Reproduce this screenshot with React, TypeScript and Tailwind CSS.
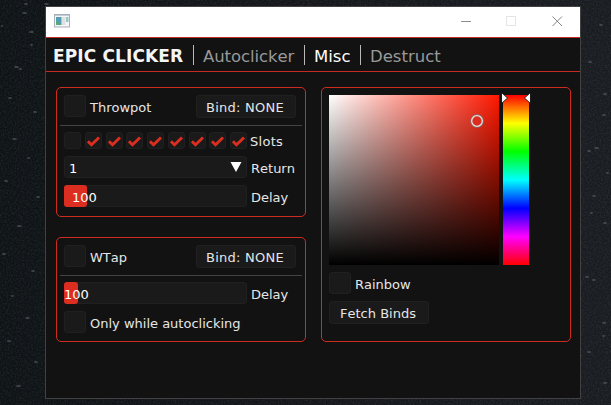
import type { ReactNode } from 'react';

const FLECKS = [
  [24, 4, 4], [44, 4, 5], [22, 13, 5], [29, 32, 5], [1, 26, 2], [30, 45, 3], [14, 67, 5], [19, 69, 3],
  [8, 98, 4], [33, 112, 4], [12, 139, 5], [27, 158, 3], [4, 181, 4], [36, 197, 4], [17, 226, 5], [2, 254, 4],
  [31, 271, 4], [11, 296, 3], [25, 318, 5], [7, 341, 4], [34, 362, 4], [16, 386, 5], [603, 94, 4],
  [594, 148, 5], [587, 151, 4], [602, 115, 4], [599, 25, 4], [588, 62, 4], [606, 173, 3], [592, 196, 4],
  [603, 223, 4], [592, 280, 4], [585, 277, 4], [602, 323, 4], [602, 336, 3], [587, 352, 4], [603, 383, 4], [590, 213, 3],
];

function Wallpaper() {
  return (
    <svg className="absolute inset-0 h-full w-full" viewBox="0 0 611 405" aria-hidden="true">
      <defs>
        <linearGradient id="night" x1="0" y1="0" x2="1" y2="0">
          <stop offset="0" stopColor="#0e1316" />
          <stop offset="0.5" stopColor="#14161a" />
          <stop offset="1" stopColor="#191d21" />
        </linearGradient>
        <filter id="grain" x="0" y="0" width="100%" height="100%">
          <feTurbulence type="fractalNoise" baseFrequency="0.6" numOctaves="2" seed="4" />
          <feColorMatrix values="0 0 0 0 0.42  0 0 0 0 0.45  0 0 0 0 0.47  0.5 0.3 0 0 -0.33" />
        </filter>
      </defs>
      <rect width="611" height="405" fill="url(#night)" />
      <rect width="611" height="405" filter="url(#grain)" opacity="0.4" />
      {FLECKS.map(([x, y, w]) => (
        <ellipse key={`${x}-${y}`} cx={x + w / 2} cy={y} rx={w / 2} ry="0.9" fill="#7d8b90" opacity="0.4" />
      ))}
    </svg>
  );
}

function TitleBar() {
  return (
    <div className="flex h-[30px] items-start bg-white">
      <svg className="mt-[7px] ml-2 h-[14px] w-4" viewBox="0 0 16 14">
        <rect x="0.5" y="0.5" width="15" height="12.5" fill="#f4f5f6" stroke="#a9afb8" />
        <path d="M1 1.5h14" stroke="#c5cbd3" />
        <rect x="2" y="3" width="5.5" height="8" fill="#559db0" />
        <path d="M2 11V7l5.500 4z" fill="#5daa78" />
        <rect x="8" y="3" width="3.500" height="8" fill="#dfe2e5" />
        <rect x="12" y="3" width="2.500" height="5" fill="#9bc8c5" />
      </svg>
      <svg className="mt-[9px] mr-[17px] ml-auto h-[11px] w-[102px]" viewBox="0 0 102 11" fill="none">
        <path d="M0 5.500h10" stroke="#8d8d8d" />
        <rect x="45.500" y="0.500" width="9" height="9" stroke="#e5e5e5" />
        <path d="M91.500 0.500l9.500 9.500M101 0.500l-9.500 9.500" stroke="#858585" />
      </svg>
    </div>
  );
}

function Divider() {
  return <span className="h-5 w-px shrink-0 bg-[#b9b9b9]" />;
}

function Nav() {
  return (
    <nav className="flex h-[35px] items-center border-y border-[#c52b20] pl-[7px] text-[16.5px] leading-[33px] text-[#999999]">
      <h1 className="w-[140px] shrink-0 pt-[3px] text-[17px] font-bold tracking-[0.12px] text-[#f5f5f5]">EPIC CLICKER</h1>
      <Divider />
      <span className="w-[110px] shrink-0 pt-[3px] pl-[9px] tracking-[-0.08px]">Autoclicker</span>
      <Divider />
      <span className="w-[55px] shrink-0 pt-[3px] pl-[9px] text-white">Misc</span>
      <Divider />
      <span className="pt-[3px] pl-[9px]">Destruct</span>
    </nav>
  );
}

function Panel({ className, children }: { className: string; children: ReactNode }) {
  return <section className={`w-[250px] rounded-[5px] border border-[#cf2c20] px-[7px] pt-[7px] ${className}`}>{children}</section>;
}

function Box() {
  return <span className="h-[22px] w-[22px] shrink-0 rounded-[3px] border border-[#202020] bg-[#1a1a1a]" />;
}

function Toggle({ label }: { label: string }) {
  return (
    <label className="flex h-[22px] items-center gap-1">
      <Box />
      <span className="pt-1">{label}</span>
    </label>
  );
}

function Button({ children, className }: { children: ReactNode; className: string }) {
  return (
    <button className={`h-[23px] w-[100px] shrink-0 rounded-[3px] border border-[#202020] bg-[#1a1a1a] pt-[3px] leading-[18px] whitespace-nowrap ${className}`}>
      {children}
    </button>
  );
}

function Header({ label }: { label: string }) {
  return (
    <div className="-mx-[4px] flex h-[31px] items-start justify-between border-b border-[#444444] pr-[6px] pl-1">
      <Toggle label={label} />
      <Button className="pr-[2px] tracking-[0.25px]">Bind: NONE</Button>
    </div>
  );
}

function Slot({ checked }: { checked: boolean }) {
  return (
    <span className="flex h-[17px] w-[17px] items-center justify-center rounded-[3px] border border-[#202020] bg-[#1a1a1a]">
      {checked && (
        <svg className="mt-px h-[11px] w-[13px] shrink-0" viewBox="0 0 13 11" fill="none">
          <path d="M0.900 5.300L4.500 8.700L12 1.500" stroke="#dc2e20" strokeWidth="2.900" />
        </svg>
      )}
    </span>
  );
}

function Slider({ fill, value }: { fill: string; value: string }) {
  return (
    <div className="flex h-[22px] items-center gap-1">
      <div className="grid h-[22px] w-[183px] grid-rows-[20px] rounded-[3px] border border-[#202020] bg-[#1a1a1a]">
        <span className={`col-start-1 row-start-1 -my-px -ml-px rounded-[3px] bg-[#dc2e20] ${fill}`} />
        <span className={`col-start-1 row-start-1 pt-[3px] leading-[18px] text-white ${value}`}>100</span>
      </div>
      <span className="pt-1">Delay</span>
    </div>
  );
}

function ThrowpotPanel() {
  return (
    <Panel className="h-[130px]">
      <Header label="Throwpot" />
      <div className="mt-[6px] flex h-[17px] items-center">
        <div className="flex w-[183px] justify-between">
          {[false, true, true, true, true, true, true, true, true].map((on, i) => (
            <Slot key={i} checked={on} />
          ))}
        </div>
        <span className="ml-[3px] pt-[2px] tracking-[0.3px]">Slots</span>
      </div>
      <div className="mt-[7px] flex h-[22px] items-center gap-1">
        <div className="flex h-[22px] w-[183px] items-center justify-between rounded-[3px] border border-[#202020] bg-[#1a1a1a] pr-1 pl-[4px]">
          <span className="pt-[3px] leading-[18px] text-white">1</span>
          <svg className="mb-px h-[10px] w-3" viewBox="0 0 12 10">
            <path d="M0.500 0h11L6 10z" fill="#ffffff" />
          </svg>
        </div>
        <span className="pt-1">Return</span>
      </div>
      <div className="mt-[7px]">
        <Slider fill="w-[23px]" value="pl-[7px]" />
      </div>
    </Panel>
  );
}

function WTapPanel() {
  return (
    <Panel className="h-[105px]">
      <Header label="WTap" />
      <div className="mt-[6px]">
        <Slider fill="w-[14px]" value="-ml-px" />
      </div>
      <div className="mt-[7px]">
        <Toggle label="Only while autoclicking" />
      </div>
    </Panel>
  );
}

function ColorPanel() {
  return (
    <Panel className="h-[255px]">
      <div className="flex gap-1">
        <div className="relative h-[170px] w-[170px] bg-[linear-gradient(to_top,#000,transparent),linear-gradient(to_right,#fff,#ff1800)]">
          <svg className="absolute top-[19px] left-[141px] h-[14px] w-[14px]" viewBox="0 0 14 14" fill="none">
            <circle cx="7" cy="7" r="6" stroke="#777777" strokeWidth="1.600" />
            <circle cx="7" cy="7" r="5.300" fill="#dc2e20" stroke="#f1dfdd" strokeWidth="1.300" />
          </svg>
        </div>
        <div className="relative h-[170px] w-[26px] bg-[linear-gradient(to_bottom,#f00,#ff0_16.67%,#0f0_33.33%,#0ff_50%,#00f_66.67%,#f0f_83.33%,#f00)]">
          <svg className="absolute -top-[3px] -left-[2px] h-3 w-[30px]" viewBox="0 0 30 12" fill="#ffffff" stroke="#000000" strokeWidth="0.800">
            <path d="M0.500 0.500L6.500 6L0.500 11.500z" />
            <path d="M29.500 0.500L23.500 6L29.500 11.500z" />
          </svg>
        </div>
      </div>
      <div className="mt-[7px]">
        <Toggle label="Rainbow" />
      </div>
      <Button className="mt-[7px] block pr-[2px]">Fetch Binds</Button>
    </Panel>
  );
}

export default function App() {
  return (
    <div className="relative h-[405px] w-[611px] overflow-hidden bg-[#15181b] pt-[6px] pl-[45px] font-['DejaVu_Sans',sans-serif] text-[13px] leading-5 text-[#e6e6e6] [font-kerning:none]">
      <Wallpaper />
      <main className="relative h-[393px] w-[536px] border border-[#414141] bg-[#121212]">
        <TitleBar />
        <Nav />
        <div className="flex gap-[15px] pt-[15px] pl-[10px]">
          <div className="flex flex-col gap-5">
            <ThrowpotPanel />
            <WTapPanel />
          </div>
          <ColorPanel />
        </div>
      </main>
    </div>
  );
}
